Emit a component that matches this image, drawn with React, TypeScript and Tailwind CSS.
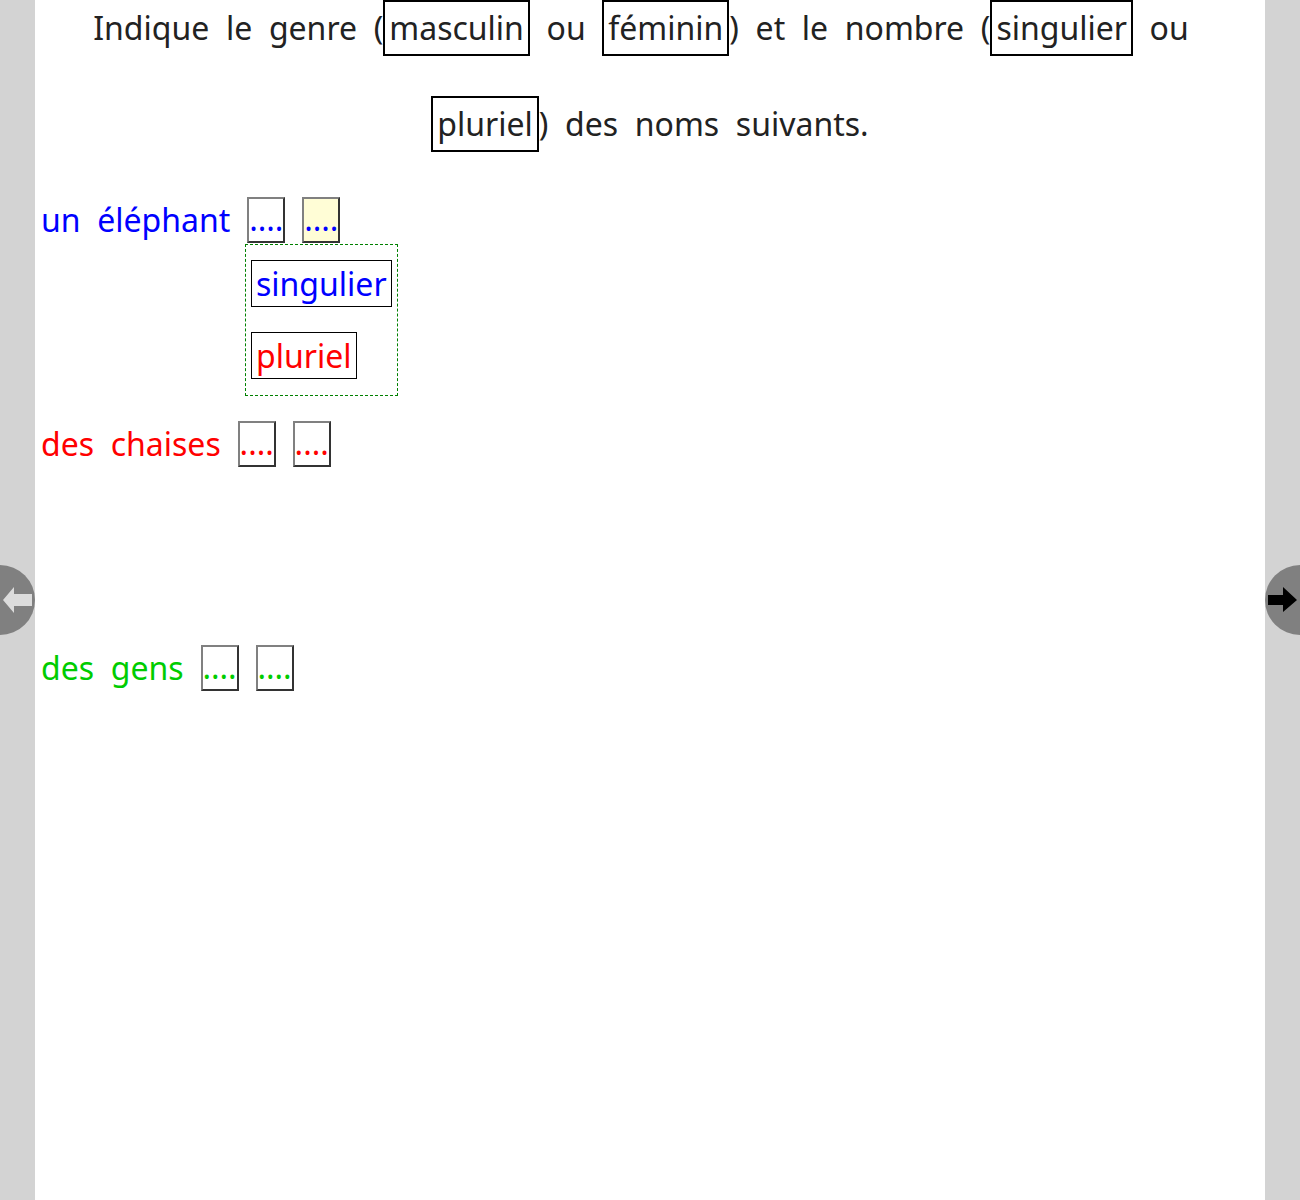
import React from "react";

const font = { fontFamily: '"Noto Sans", "Open Sans", sans-serif' };

function Kw({ children }: { children: React.ReactNode }) {
  return (
    <span className="inline-block border-2 border-black px-[4px] py-[2px] leading-normal [word-spacing:0]">
      {children}
    </span>
  );
}

function Blank({ color, yellow }: { color: string; yellow?: boolean }) {
  return (
    <span
      className={`flex h-[46px] w-[38px] shrink-0 items-start justify-center border-2 border-t-[#808080] border-l-[#808080] border-r-[#333333] border-b-[#333333] leading-[40px] ${
        yellow ? "bg-[#fffdd6]" : "bg-white"
      } ${color}`}
    >
      <span>....</span>
    </span>
  );
}

export default function App() {
  return (
    <div className="relative flex h-[1200px] w-full justify-center overflow-hidden bg-[#d3d3d3]" style={font}>
      <div className="flex h-full w-[1230px] flex-col bg-white text-[32px]">
        <p className="-mt-[20px] text-center leading-[96px] text-[#222222] [word-spacing:0.26em]">
          Indique le genre (<Kw>masculin</Kw> ou <Kw>féminin</Kw>) et le nombre (<Kw>singulier</Kw> ou
          <span className="inline-block w-[18px]"></span>
          <br />
          <Kw>pluriel</Kw>) des noms suivants.
        </p>

        <div className="mt-[25px] flex flex-col gap-[178px] pl-[6px]">
          <div className="relative flex h-[46px] items-center gap-[17px]">
            <span className="leading-[46px] text-[#0000ff] [word-spacing:0.26em]">un éléphant</span>
            <Blank color="text-[#0000ff]" />
            <Blank color="text-[#0000ff]" yellow />
            <div className="absolute left-[204px] top-[47px] flex flex-col items-start gap-[25px] border border-dashed border-[#008000] bg-white pb-[16px] pl-[5px] pr-[5px] pt-[15px]">
              <span className="border border-black px-[4px] leading-[45px] text-[#0000ff]">singulier</span>
              <span className="border border-black px-[4px] leading-[45px] text-[#ff0000]">pluriel</span>
            </div>
          </div>

          <div className="flex h-[46px] items-center gap-[17px]">
            <span className="leading-[46px] text-[#ff0000] [word-spacing:0.26em]">des chaises</span>
            <Blank color="text-[#ff0000]" />
            <Blank color="text-[#ff0000]" />
          </div>

          <div className="flex h-[46px] items-center gap-[17px]">
            <span className="leading-[46px] text-[#00cc00] [word-spacing:0.26em]">des gens</span>
            <Blank color="text-[#00cc00]" />
            <Blank color="text-[#00cc00]" />
          </div>
        </div>
      </div>

      <div className="absolute left-[-35px] top-[565px] h-[70px] w-[70px] rounded-full bg-[#808080]">
        <svg className="absolute left-[35px] top-0" width="35" height="70" viewBox="0 0 35 70">
          <polygon points="3,35 14,22 14,29 32,29 32,41 14,41 14,48" fill="#dcdcdc" />
        </svg>
      </div>
      <div className="absolute right-[-35px] top-[565px] h-[70px] w-[70px] rounded-full bg-[#808080]">
        <svg className="absolute left-0 top-0" width="35" height="70" viewBox="0 0 35 70">
          <polygon points="3,30 18,30 18,22 32,35 18,47 18,40 3,40" fill="#000000" />
        </svg>
      </div>
    </div>
  );
}
